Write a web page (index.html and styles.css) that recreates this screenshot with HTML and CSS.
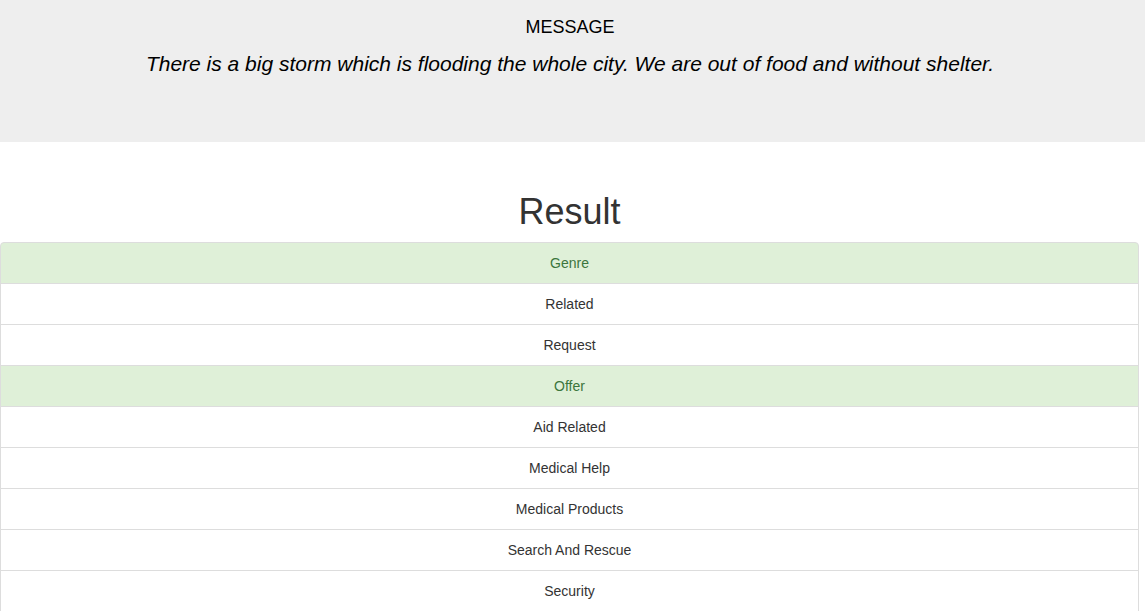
FILE: index.html
```html
<!DOCTYPE html>
<html>
<head>
<meta charset="utf-8">
<link rel="stylesheet" href="styles.css">
</head>
<body>
<div class="jumbotron">
  <div class="inner">
    <h4 class="label">MESSAGE</h4>
    <p class="message">There is a big storm which is flooding the whole city. We are out of food and without shelter.</p>
  </div>
</div>
<div class="content">
  <h1 class="title">Result</h1>
  <ul class="list-group">
    <li class="item success">Genre</li>
    <li class="item">Related</li>
    <li class="item">Request</li>
    <li class="item success">Offer</li>
    <li class="item">Aid Related</li>
    <li class="item">Medical Help</li>
    <li class="item">Medical Products</li>
    <li class="item">Search And Rescue</li>
    <li class="item">Security</li>
  </ul>
</div>
</body>
</html>
```
FILE: styles.css
```css
html, body {
  margin: 0;
  padding: 0;
}
body {
  font-family: "Liberation Sans", Arial, sans-serif;
  font-size: 14px;
  line-height: 20px;
  color: #333;
  background: #fff;
}
.jumbotron {
  background: #eee;
  height: 142px;
  box-sizing: border-box;
  padding-top: 18px;
}
.inner {
  width: 1140px;
  text-align: center;
}
.label {
  margin: 0 0 11px;
  font-size: 18px;
  font-weight: 500;
  line-height: 1.1;
  color: #000;
}
.message {
  margin: 0;
  font-size: 21px;
  line-height: 30px;
  font-style: italic;
  color: #000;
}
.content {
  width: 1139px;
}
.title {
  margin: 50px 0 10px;
  font-size: 36px;
  font-weight: 500;
  line-height: 1.1;
  text-align: center;
  color: #333;
}
.list-group {
  list-style: none;
  margin: 0;
  padding: 0;
}
.item {
  padding: 10px 15px;
  border: 1px solid #ddd;
  margin-bottom: -1px;
  background: #fff;
  text-align: center;
  color: #333;
}
.item:first-child {
  border-top-left-radius: 4px;
  border-top-right-radius: 4px;
}
.item.success {
  background: #dff0d8;
  color: #3c763d;
}
```
